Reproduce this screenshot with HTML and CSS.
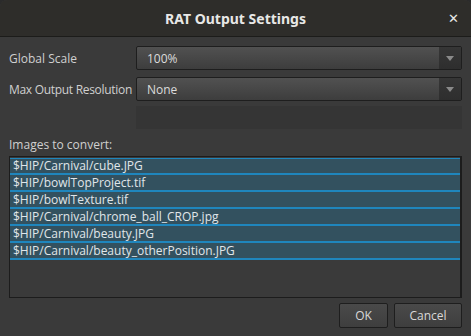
FILE: index.html
```html
<!DOCTYPE html>
<html lang="en">
<head>
    <meta charset="UTF-8">
    <title>RAT Output Settings</title>
    <link rel="stylesheet" href="styles.css">
</head>
<body>

<div class="dialog">
    <div class="titlebar">
        <span class="title">RAT Output Settings</span>
        <span class="close">&#x2715;</span>
    </div>

    <div class="content">
        <div class="form-row">
            <div class="label">Global Scale</div>
            <div class="combo">
                <span class="combo-value">100%</span>
                <span class="combo-arrow"></span>
            </div>
        </div>
        <div class="form-row">
            <div class="label label-tight">Max Output Resolution</div>
            <div class="combo">
                <span class="combo-value">None</span>
                <span class="combo-arrow"></span>
            </div>
        </div>
        <div class="form-row form-row-last">
            <div class="label"></div>
            <div class="field-disabled"></div>
        </div>

        <div class="list-label">Images to convert:</div>
        <div class="file-list">
            <div class="file-item">$HIP/Carnival/cube.JPG</div>
            <div class="file-item">$HIP/bowlTopProject.tif</div>
            <div class="file-item">$HIP/bowlTexture.tif</div>
            <div class="file-item">$HIP/Carnival/chrome_ball_CROP.jpg</div>
            <div class="file-item">$HIP/Carnival/beauty.JPG</div>
            <div class="file-item">$HIP/Carnival/beauty_otherPosition.JPG</div>
        </div>

        <div class="buttons">
            <button class="btn btn-ok">OK</button>
            <button class="btn btn-cancel">Cancel</button>
        </div>
    </div>
</div>

</body>
</html>
```

FILE: styles.css
```css
:root {
    --body-bg: #3a3a3a;
    --title-bg: #2e2d2a;
    --text: #d4d4d4;
    --item-bg: #33515f;
    --item-line: #1f86bd;
}

html, body { margin: 0; background: #2b2b2b; }
body { font-family: "Open Sans", "DejaVu Sans", sans-serif; font-size: 12px; color: var(--text); }

.dialog {
    width: 471px;
    height: 336px;
    background: var(--body-bg);
    border-radius: 7px 7px 0 0;
    overflow: hidden;
    display: flex;
    flex-direction: column;
}

/* Заголовок окна */
.titlebar {
    height: 36px;
    flex: none;
    background: var(--title-bg);
    border-bottom: 1px solid #1c1c1a;
    display: flex;
    align-items: center;
    justify-content: center;
    position: relative;
}
.title { font-family: "Noto Sans", sans-serif; font-weight: bold; font-size: 14px; color: #e8e8e6; }
.close {
    position: absolute;
    right: 12px;
    top: 9px;
    font-size: 13px;
    font-weight: bold;
    color: #e8e8e6;
}

.content { padding: 9px 9px 0 9px; display: flex; flex-direction: column; }

.form-row { display: flex; align-items: center; height: 24px; margin-bottom: 7px; }
.form-row-last { height: 23px; margin-top: -2px; margin-bottom: 0; }
.form-row .label { width: 127px; flex: none; color: #d0d0d0; white-space: nowrap; }
.form-row .label-tight { letter-spacing: -0.3px; }

.combo {
    flex: 1;
    height: 22px;
    border: 1px solid #1e1e1e;
    border-radius: 2px;
    background: linear-gradient(180deg, #515151 0%, #474747 50%, #3d3d3d 100%);
    display: flex;
    align-items: center;
}
.combo-value { flex: 1; padding-left: 10px; color: #dcdcdc; }
.combo-arrow {
    width: 22px;
    height: 22px;
    flex: none;
    background: linear-gradient(180deg, #363636 0%, #2e2e2e 100%);
    display: flex;
    align-items: center;
    justify-content: center;
}
.combo-arrow::before {
    content: "";
    border-left: 4px solid transparent;
    border-right: 4px solid transparent;
    border-top: 5px solid #8a8a8a;
}

.field-disabled { flex: 1; height: 23px; background: #353535; border-radius: 1px; }

.list-label { height: 18px; line-height: 18px; margin-top: 7px; margin-bottom: 2px; color: #d0d0d0; }

.file-list {
    height: 139px;
    border: 1px solid #1c1c1c;
    border-right-width: 2px;
    background: var(--body-bg);
    padding-top: 1px;
}

.file-item {
    height: 15px;
    line-height: 15px;
    background: var(--item-bg);
    border-bottom: 2px solid var(--item-line);
    padding-left: 3px;
    color: #e0e6ea;
    white-space: nowrap;
}
.file-item:first-child { border-top: 1px solid var(--item-line); height: 14px; line-height: 14px; }

.buttons { display: flex; justify-content: flex-end; gap: 6px; margin-top: 5px; }

.btn {
    height: 25px;
    border: 1px solid #1e1e1e;
    border-radius: 2px;
    background: linear-gradient(180deg, #4a4a4a 0%, #3e3e3e 100%);
    color: #d8d8d8;
    font-family: inherit;
    font-size: 12px;
    padding: 0;
}
.btn-ok { width: 49px; }
.btn-cancel { width: 68px; }
```
